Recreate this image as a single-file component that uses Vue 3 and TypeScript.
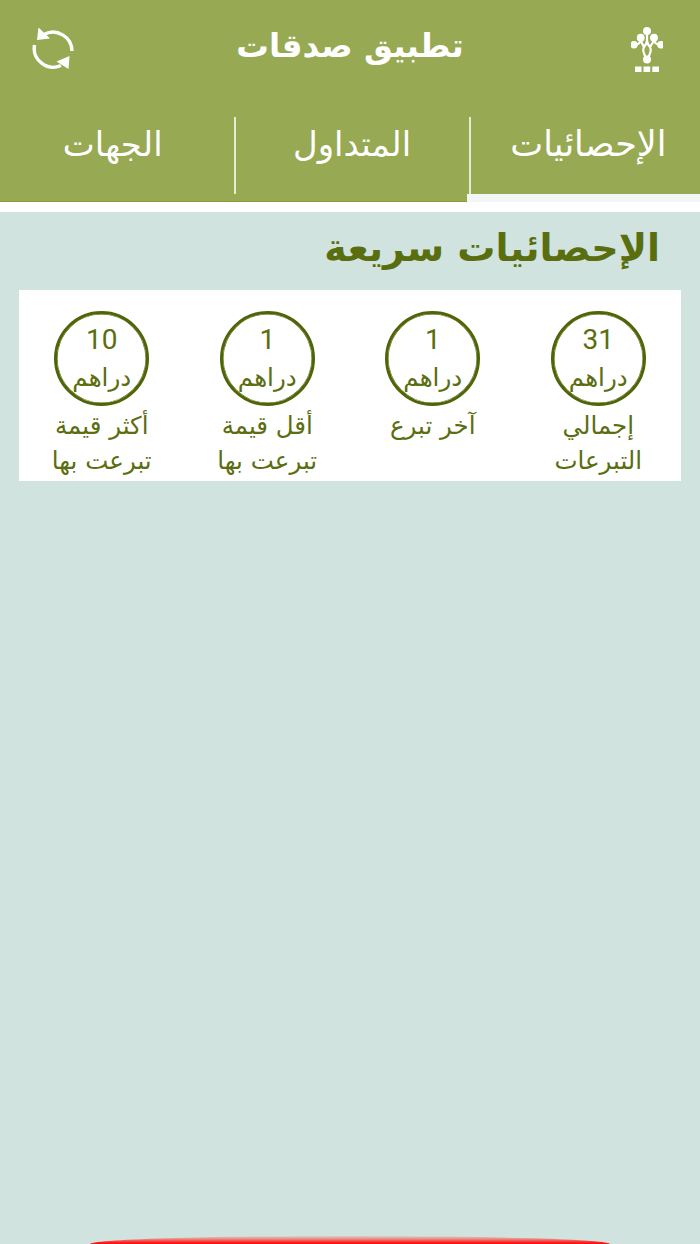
<script setup lang="ts">
interface Stat { value: string; label: string[] }
const stats: Stat[] = [
  { value: '31', label: ['إجمالي', 'التبرعات'] },
  { value: '1', label: ['آخر تبرع'] },
  { value: '1', label: ['أقل قيمة', 'تبرعت بها'] },
  { value: '10', label: ['أكثر قيمة', 'تبرعت بها'] },
]
const tabs = ['الإحصائيات', 'المتداول', 'الجهات']
</script>

<template>
  <div class="page" dir="rtl">
    <header class="header">
      <div class="topbar">
        <svg class="logo" width="32" height="48" viewBox="631 26 32 48" aria-hidden="true">
          <g fill="none" stroke="#fff" stroke-width="2.2" stroke-linecap="round">
            <path d="M647 31 V40 Q647 44 650 47 Q652.500 51 647 59" />
            <path d="M647 40 Q647 44 644 47 Q641.500 51 647 59" />
            <path d="M640.700 38 Q640.700 45 634 45 M640.700 38 Q641 43 644 47" />
            <path d="M654 38 Q654 45 661 45 M654 38 Q653.500 43 650 47" />
          </g>
          <g fill="#fff">
            <circle cx="647" cy="31" r="4" />
            <circle cx="640.700" cy="37.700" r="3.900" />
            <circle cx="654" cy="37.700" r="3.900" />
            <circle cx="634" cy="44.700" r="3.700" />
            <circle cx="661" cy="44.700" r="3.800" />
            <circle cx="647" cy="59.500" r="4" />
            <rect x="635" y="66.500" width="6.500" height="5.500" />
            <rect x="643.500" y="66.500" width="6.700" height="5.500" />
            <rect x="652.300" y="66.500" width="6.700" height="5.500" />
          </g>
        </svg>
        <h1 class="title">تطبيق صدقات</h1>
        <svg class="refresh" width="44" height="46" viewBox="32 25 44 46" aria-hidden="true">
          <g fill="none" stroke="#fff" stroke-width="3.400">
            <path d="M44 34.500 A19 19 0 0 1 72 51" />
            <path d="M34.500 45 A19 19 0 0 0 61 65.500" />
          </g>
          <g fill="#fff">
            <path d="M38.500 27.500 L37 40 L50 38.500 Z" />
            <path d="M69.500 56 L68.500 69 L56.500 61.500 Z" />
          </g>
        </svg>
      </div>
      <nav class="tabs">
        <div v-for="(tab, i) in tabs" :key="tab" class="tab" :class="['tab-' + i, { active: i === 0 }]">
          <span>{{ tab }}</span>
        </div>
      </nav>
    </header>

    <main class="content">
      <h2 class="heading">الإحصائيات سريعة</h2>
      <section class="card">
        <div v-for="(stat, i) in stats" :key="i" class="stat">
          <div class="ring">
            <span class="value">{{ stat.value }}</span>
            <span class="unit">دراهم</span>
          </div>
          <p class="label">
            <span v-for="line in stat.label" :key="line">{{ line }}</span>
          </p>
        </div>
      </section>
    </main>

    <div class="fab"></div>
  </div>
</template>

<style>
html, body { margin: 0; padding: 0; }
</style>

<style scoped>
.page {
  position: relative;
  width: 700px;
  height: 1244px;
  overflow: hidden;
  background: #d0e3de;
  font-family: "DejaVu Sans", "Noto Sans", sans-serif;
  display: flex;
  flex-direction: column;
}
.header {
  height: 202px;
  box-sizing: border-box;
  background: #97a952;
  border-bottom: 1px solid #8a9e2f;
  flex: none;
}
.topbar {
  height: 117px;
  display: flex;
  align-items: flex-start;
  justify-content: space-between;
  padding: 0 37px 0 32px;
  box-sizing: border-box;
}
.logo { margin-top: 26px; }
.refresh { margin-top: 25px; }
.title {
  margin: 21px 7px 0 0;
  font-size: 32.5px;
  line-height: 50px;
  font-weight: 700;
  color: #fff;
}
.tabs {
  display: grid;
  grid-template-columns: repeat(3, 1fr);
  height: 84px;
}
.tab {
  position: relative;
  color: #fff;
  font-size: 34px;
  font-weight: 400;
  text-align: center;
  line-height: 54px;
}
.tab-0 { padding-left: 10px; font-size: 35px; }
.tab-1 { padding-left: 4px; }
.tab-2 { padding-right: 8px; }
.tab-0::after,
.tab-1::after {
  content: "";
  position: absolute;
  top: 0;
  height: 77px;
  width: 2px;
  background: #e6ebd2;
}
.tab-0::after { left: 2px; }
.tab-1::after { left: 1px; }
.tab.active::before {
  content: "";
  position: absolute;
  left: 0;
  right: 0;
  bottom: -1px;
  height: 8px;
  background: #f3f5f6;
}
.content {
  flex: 1;
  border-top: 10px solid #fff;
  padding: 0 19px;
}
.heading {
  margin: 8px 21px 14px 0;
  font-size: 38px;
  line-height: 56px;
  font-weight: 700;
  color: #5a6e10;
}
.card {
  background: #fff;
  display: grid;
  grid-template-columns: repeat(4, 1fr);
  height: 191px;
  box-sizing: border-box;
  padding-top: 21px;
}
.stat {
  display: flex;
  flex-direction: column;
  align-items: center;
  color: #5a6e10;
}
.ring {
  width: 95px;
  height: 95px;
  box-sizing: border-box;
  border: 3px solid #4f6508;
  box-shadow: inset 0 0 0 0.5px #4f6508;
  border-radius: 50%;
  display: flex;
  flex-direction: column;
  align-items: center;
  white-space: nowrap;
}
.value {
  font-family: Roboto, sans-serif;
  font-size: 28px;
  line-height: 32px;
  margin-top: 10px;
}
.unit {
  font-size: 24.5px;
  line-height: 34px;
  margin-top: 5px;
}
.label {
  margin: 2px 0 0;
  display: flex;
  flex-direction: column;
  align-items: center;
  font-size: 24.5px;
  line-height: 35px;
  white-space: nowrap;
}
.fab {
  position: absolute;
  left: 90px;
  width: 520px;
  bottom: -8px;
  height: 16px;
  border-radius: 50%;
  background: linear-gradient(#d8cfc8 0, #e98a84 3px, #ff1010 7px);
}
</style>
